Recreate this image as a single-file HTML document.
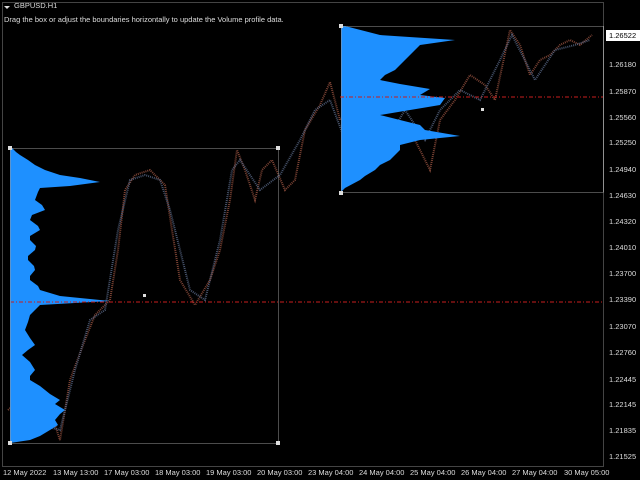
<!DOCTYPE html>
<html><head><meta charset="utf-8"><style>
html,body{margin:0;padding:0;background:#000;width:640px;height:480px;overflow:hidden;font-family:"Liberation Sans",sans-serif;}
.t{position:absolute;color:#ddd;font-size:7.5px;white-space:nowrap;}
</style></head><body>
<svg width="640" height="480" style="position:absolute;left:0;top:0">
<rect x="2.5" y="2.5" width="601" height="464" fill="none" stroke="#888" stroke-dasharray="1 1"/>
<!-- price -->
<polyline fill="none" stroke="#8a4a3a" stroke-width="2" stroke-dasharray="1 1" opacity="0.9" points="8,410 20,400 35,420 50,410 60,440 70,380 85,340 95,315 110,300 118,250 125,190 135,175 150,170 165,185 172,230 180,280 195,305 210,280 220,250 230,200 237,150 245,170 255,200 262,170 272,160 285,190 295,180 305,130 320,105 330,82 340,120 355,110 370,130 385,160 395,140 410,130 420,150 430,170 440,120 455,100 470,75 485,85 495,100 510,30 520,45 530,75 540,60 550,55 560,45 570,40 580,45 592,35"/>
<polyline fill="none" stroke="#5a6a8a" stroke-width="2" stroke-dasharray="1 1" opacity="0.8" points="12,440 40,425 60,430 75,370 90,320 105,310 118,230 130,180 145,175 160,180 170,210 190,290 205,300 220,240 232,170 240,160 260,190 280,175 300,140 315,110 330,100 345,140 360,120 375,160 390,135 405,110 425,140 440,110 460,90 480,100 500,60 512,35 535,80 555,50 575,45 590,40"/>
<!-- left profile -->
<polygon fill="#1e90ff" points="10,148 12,148 16,152 20,155 28,160 35,165 45,170 60,175 80,178 100,182 70,186 40,188 38,192 35,200 42,205 45,210 32,215 30,220 38,226 40,230 30,236 30,240 36,246 35,250 28,256 28,260 34,266 35,270 30,276 30,280 38,286 40,290 60,296 110,301 40,305 35,310 30,315 28,322 25,330 30,338 35,345 28,350 22,355 30,362 35,370 30,376 30,380 40,386 45,390 50,394 60,400 55,404 65,410 60,414 55,420 58,425 50,430 40,436 30,440 10,443"/>
<!-- right profile -->
<polygon fill="#1e90ff" points="341,26 345,26 380,35 455,40 420,45 415,50 410,55 405,60 400,65 395,70 385,75 380,80 400,84 430,89 420,95 445,98 440,105 380,115 400,120 420,125 425,130 460,136 420,140 400,145 400,150 390,160 380,165 375,170 365,176 360,180 345,188 341,192"/>
<line x1="10" y1="302" x2="604" y2="302" stroke="#c81e1e" stroke-dasharray="4 2 1 2"/>
<line x1="340" y1="97" x2="604" y2="97" stroke="#c81e1e" stroke-dasharray="4 2 1 2"/>
<rect x="10.5" y="148.5" width="268" height="295" fill="none" stroke="#999" stroke-dasharray="1 1"/>
<rect x="341.5" y="26.5" width="262" height="166" fill="none" stroke="#999" stroke-dasharray="1 1"/>
<g fill="#ddd"><rect x="8" y="146" width="4" height="4"/><rect x="276" y="146" width="4" height="4"/><rect x="8" y="441" width="4" height="4"/><rect x="276" y="441" width="4" height="4"/><rect x="143" y="294" width="3" height="3"/><rect x="339" y="24" width="4" height="4"/><rect x="339" y="191" width="4" height="4"/><rect x="481" y="108" width="3" height="3"/></g>
<path d="M4,6 L10,6 L7,9 Z" fill="#ddd"/>
<rect x="606" y="30" width="34" height="11" fill="#fff"/>
</svg>
<div class="t" style="left:14px;top:1px">GBPUSD.H1</div>
<div class="t" style="left:4px;top:15px">Drag the box or adjust the boundaries horizontally to update the Volume profile data.</div>
<div class="t" style="left:609px;top:31px;color:#000">1.26522</div>
<div class="t" style="left:609px;top:60px">1.26180</div>
<div class="t" style="left:609px;top:87px">1.25870</div>
<div class="t" style="left:609px;top:113px">1.25560</div>
<div class="t" style="left:609px;top:138px">1.25250</div>
<div class="t" style="left:609px;top:165px">1.24940</div>
<div class="t" style="left:609px;top:191px">1.24630</div>
<div class="t" style="left:609px;top:217px">1.24320</div>
<div class="t" style="left:609px;top:243px">1.24010</div>
<div class="t" style="left:609px;top:269px">1.23700</div>
<div class="t" style="left:609px;top:295px">1.23390</div>
<div class="t" style="left:609px;top:322px">1.23070</div>
<div class="t" style="left:609px;top:348px">1.22760</div>
<div class="t" style="left:609px;top:375px">1.22445</div>
<div class="t" style="left:609px;top:400px">1.22145</div>
<div class="t" style="left:609px;top:426px">1.21835</div>
<div class="t" style="left:609px;top:452px">1.21525</div>
<div class="t" style="left:3px;top:468px">12 May 2022</div>
<div class="t" style="left:53px;top:468px">13 May 13:00</div>
<div class="t" style="left:104px;top:468px">17 May 03:00</div>
<div class="t" style="left:155px;top:468px">18 May 03:00</div>
<div class="t" style="left:206px;top:468px">19 May 03:00</div>
<div class="t" style="left:257px;top:468px">20 May 03:00</div>
<div class="t" style="left:308px;top:468px">23 May 04:00</div>
<div class="t" style="left:359px;top:468px">24 May 04:00</div>
<div class="t" style="left:410px;top:468px">25 May 04:00</div>
<div class="t" style="left:461px;top:468px">26 May 04:00</div>
<div class="t" style="left:512px;top:468px">27 May 04:00</div>
<div class="t" style="left:564px;top:468px">30 May 05:00</div>
</body></html>
